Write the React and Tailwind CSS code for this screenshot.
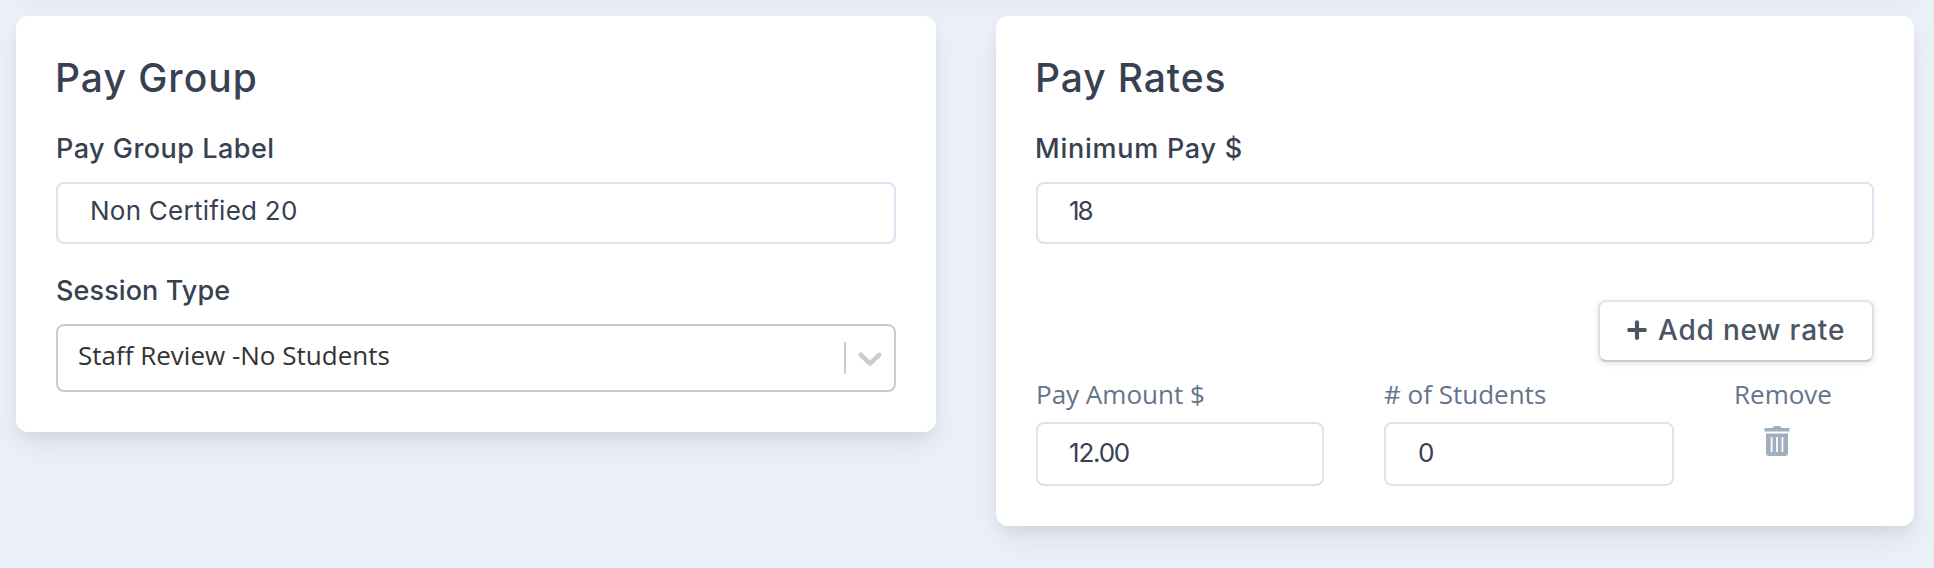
import React from 'react';
import { FaPlus } from 'react-icons/fa';

const Card = ({ title, tracking, children }) => (
    <section className="rounded-xl bg-white px-10 pt-[38px] pb-10 shadow-[0_14px_32px_-2px_rgba(0,0,0,0.08),0_6px_12px_-2px_rgba(0,0,0,0.06)]">
        <h2 className={`-ml-px h-12 text-[39px] leading-12 font-medium text-[#374151] ${tracking}`}>{title}</h2>
        {children}
    </section>
);

const Label = ({ className, children }) => (
    <label className={`block h-9 text-[27px] leading-9 font-medium text-[#374151] ${className}`}>{children}</label>
);

const ColumnLabel = ({ children }) => (
    <p className="h-9 font-['Open_Sans',sans-serif] text-[26px] leading-9 text-[#64748b]">{children}</p>
);

const Input = ({ value, className }) => (
    <input
        type="text"
        defaultValue={value}
        className={`block w-full rounded-lg border-2 border-[#d9e4f1] bg-white text-[26px] text-[#374151] outline-none ${className}`}
    />
);

const ChevronIcon = () => (
    <svg className="size-10" viewBox="0 0 20 20" fill="currentColor">
        <path d="M4.516 7.548c0.436-0.446 1.043-0.481 1.576 0l3.908 3.747 3.908-3.747c0.533-0.481 1.141-0.446 1.574 0 0.436 0.445 0.408 1.197 0 1.615-0.406 0.418-4.695 4.502-4.695 4.502-0.217 0.223-0.502 0.335-0.787 0.335s-0.57-0.112-0.789-0.335c0 0-4.287-4.084-4.695-4.502s-0.436-1.17 0-1.615z" />
    </svg>
);

const TrashIcon = () => (
    <svg className="h-[30px] w-[26px]" viewBox="0 0 26 30" fill="currentColor">
        <path d="M.5 2h8l.8-1.3Q9.800 0 10.500 0h5q.7 0 1.200.7L17.500 2h8v3.500H.5z" />
        <path
            fillRule="evenodd"
            d="M2 7.500h22V27q0 3-3 3H5q-3 0-3-3zM6.700 11v15h1.800V11zM12.100 11v15h1.800V11zM17.500 11v15h1.800V11z"
        />
    </svg>
);

const App = () => {
    return (
        <div className="h-[568px] overflow-hidden bg-[#ecf0f9] pr-5 pl-4 font-['Inter',sans-serif]">
            <div className="-mt-16 mb-8 h-12 rounded-xl bg-white shadow-[0_14px_32px_-2px_rgba(0,0,0,0.08),0_6px_12px_-2px_rgba(0,0,0,0.06)]"></div>

            <div className="grid grid-cols-[920px_918px] items-start gap-[60px]">
                <Card title="Pay Group" tracking="tracking-[1px]">
                    <Label className="mt-[29px] tracking-[0.48px]">Pay Group Label</Label>
                    <Input value="Non Certified 20" className="mt-[15px] h-[62px] px-8 pb-1.5 tracking-[0.25px]" />

                    <Label className="mt-[29px] tracking-[0.1px]">Session Type</Label>
                    <div className="mt-[15px] flex h-[68px] items-center rounded-lg border-2 border-[#cccccc] pl-5">
                        <span className="grow pb-1.5 font-['Open_Sans',sans-serif] text-[26px] text-[#333333]">Staff Review -No Students</span>
                        <span className="h-8 w-0.5 bg-[#cccccc]"></span>
                        <span className="px-1 text-[#cccccc]">
                            <ChevronIcon />
                        </span>
                    </div>
                </Card>

                <Card title="Pay Rates" tracking="tracking-[0.9px]">
                    <Label className="-ml-px mt-[29px] tracking-[0.75px]">Minimum Pay $</Label>
                    <Input value="18" className="mt-[15px] h-[62px] px-[31px] pb-1.5 tracking-[-2px]" />

                    <div className="mt-14 flex justify-end">
                        <button className="flex h-[62px] w-[276px] items-center rounded-lg border-2 border-x-[#dddfe3] border-t-[#e5e7eb] border-b-[#c9cbd0] bg-white pb-0.5 pl-[26px] shadow-[0_2px_6px_rgba(0,0,0,0.1)]">
                            <FaPlus className="size-[22px] text-[#4b5563]" />
                            <span className="ml-2.5 text-[28px] font-medium tracking-[0.8px] whitespace-nowrap text-[#4b5563]">Add new rate</span>
                        </button>
                    </div>

                    <div className="mt-3.5 grid grid-cols-[288px_290px_140px] gap-[60px]">
                        <div>
                            <ColumnLabel>Pay Amount $</ColumnLabel>
                            <Input value="12.00" className="mt-2.5 h-16 px-[31px] pb-1 tracking-[-1.2px]" />
                        </div>
                        <div>
                            <ColumnLabel># of Students</ColumnLabel>
                            <Input value="0" className="mt-2.5 h-16 px-8 pb-1" />
                        </div>
                        <div>
                            <ColumnLabel>Remove</ColumnLabel>
                            <button className="mt-3.5 ml-[30px] block text-[#a0aec0]">
                                <TrashIcon />
                            </button>
                        </div>
                    </div>
                </Card>
            </div>
        </div>
    );
};

export default App;
